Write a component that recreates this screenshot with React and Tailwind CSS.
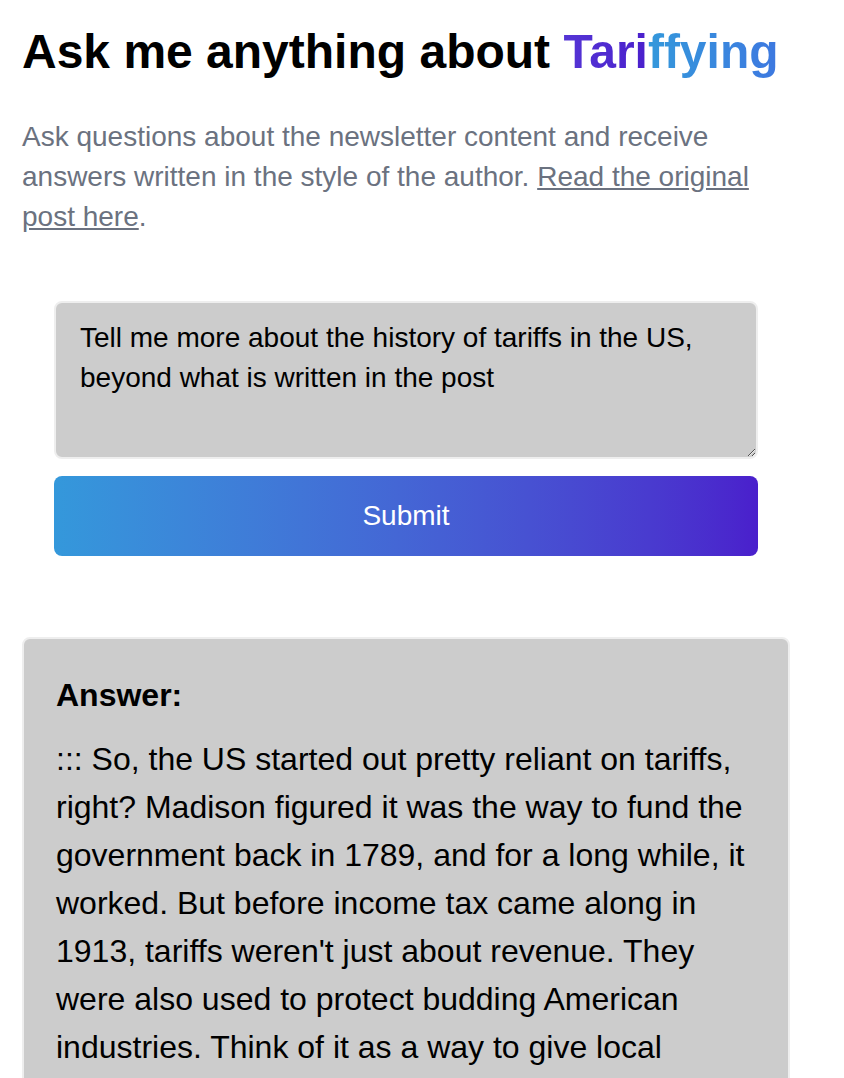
import { useState } from "react";

const answerText =
  "::: So, the US started out pretty reliant on tariffs, right? Madison figured it was the way to fund the government back in 1789, and for a long while, it worked. But before income tax came along in 1913, tariffs weren't just about revenue. They were also used to protect budding American industries. Think of it as a way to give local manufacturers a fighting chance against cheaper imports from Europe.";

export default function App() {
  const [question, setQuestion] = useState(
    "Tell me more about the history of tariffs in the US, beyond what is written in the post"
  );

  const handleSubmit = (event) => {
    event.preventDefault();
  };

  return (
    <div className="min-h-screen bg-white font-['Liberation_Sans',Arial,sans-serif] text-black">
      <div className="w-[790px] pl-[22px] pt-[28px] pb-10">
        <h1 className="text-[48px] font-bold leading-none">
          Ask me anything about{" "}
          <span className="bg-linear-to-r from-[#5535d5] to-[#4a1fcc] bg-clip-text text-transparent">
            Tari
          </span>
          <span className="bg-linear-to-r from-[#3498db] to-[#3d78e0] bg-clip-text text-transparent">
            ffying
          </span>
        </h1>

        <p className="mt-[41px] text-[28px] leading-[40px] text-[#6b7280]">
          Ask questions about the newsletter content and receive answers
          written in the style of the author.{" "}
          <a href="#" className="underline">
            Read the original post here
          </a>
          .
        </p>

        <form className="mt-[64px] px-8" onSubmit={handleSubmit}>
          <textarea
            value={question}
            onChange={(event) => setQuestion(event.target.value)}
            className="block h-[158px] w-full rounded-lg border-2 border-[#eeeeee] bg-[#cccccc] px-6 py-[15px] text-[28px] leading-[40px] text-black focus:outline-none"
          />
          <button
            type="submit"
            className="mt-[17px] h-[80px] w-full rounded-lg bg-linear-to-r from-[#3498db] to-[#4a1fcc] text-[28px] text-white"
          >
            Submit
          </button>
        </form>

        <div className="mt-[81px] rounded-lg border-2 border-[#eeeeee] bg-[#cccccc] px-8 pt-8 pb-10">
          <h3 className="text-[32px] font-bold leading-[48px]">Answer:</h3>
          <p className="mt-[16px] text-[32px] leading-[48px]">{answerText}</p>
        </div>
      </div>
    </div>
  );
}
